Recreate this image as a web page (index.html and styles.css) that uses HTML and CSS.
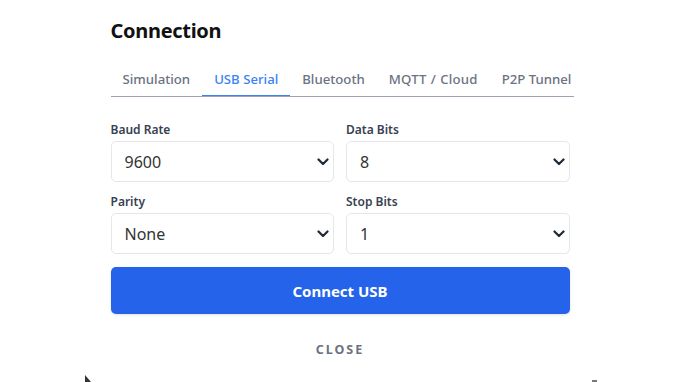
FILE: index.html
```html
<!DOCTYPE html>
<html lang="en">
<head>
<meta charset="utf-8">
<title>Connection</title>
<link rel="stylesheet" href="styles.css">
</head>
<body>
<div class="dialog">
  <h2 class="title">Connection</h2>
  <div class="tabs">
    <div class="tab">Simulation</div>
    <div class="tab active">USB Serial</div>
    <div class="tab">Bluetooth</div>
    <div class="tab wide">MQTT / Cloud</div>
    <div class="tab">P2P Tunnel</div>
  </div>
  <div class="form">
    <div class="field">
      <div class="label">Baud Rate</div>
      <div class="select"><span>9600</span><svg class="chev" viewBox="0 0 12 8" width="12" height="8"><path d="M1.5 1.5 L6 6 L10.5 1.5" fill="none" stroke="#1f2937" stroke-width="2.2" stroke-linecap="round" stroke-linejoin="round"/></svg></div>
    </div>
    <div class="field">
      <div class="label">Data Bits</div>
      <div class="select"><span>8</span><svg class="chev" viewBox="0 0 12 8" width="12" height="8"><path d="M1.5 1.5 L6 6 L10.5 1.5" fill="none" stroke="#1f2937" stroke-width="2.2" stroke-linecap="round" stroke-linejoin="round"/></svg></div>
    </div>
    <div class="field">
      <div class="label">Parity</div>
      <div class="select"><span>None</span><svg class="chev" viewBox="0 0 12 8" width="12" height="8"><path d="M1.5 1.5 L6 6 L10.5 1.5" fill="none" stroke="#1f2937" stroke-width="2.2" stroke-linecap="round" stroke-linejoin="round"/></svg></div>
    </div>
    <div class="field">
      <div class="label">Stop Bits</div>
      <div class="select"><span>1</span><svg class="chev" viewBox="0 0 12 8" width="12" height="8"><path d="M1.5 1.5 L6 6 L10.5 1.5" fill="none" stroke="#1f2937" stroke-width="2.2" stroke-linecap="round" stroke-linejoin="round"/></svg></div>
    </div>
  </div>
  <button class="connect">Connect USB</button>
  <div class="close">CLOSE</div>
</div>
<div class="corner corner-left"></div>
<div class="corner corner-right"></div>
</body>
</html>
```
FILE: styles.css
```css
* { box-sizing: border-box; }
html, body { margin: 0; padding: 0; background: #ffffff; }
body {
  font-family: "Noto Sans", "Open Sans", sans-serif;
  width: 680px;
  height: 382px;
  overflow: hidden;
  position: relative;
}
.dialog {
  width: 459px;
  margin: 0 auto;
  padding-top: 17px;
}
.title {
  margin: 0;
  font-size: 20px;
  line-height: 28px;
  font-weight: 700;
  letter-spacing: -0.3px;
  color: #111111;
}
.tabs {
  margin-top: 15px;
  width: 463px;
  display: flex;
  overflow: hidden;
  border-bottom: 1px solid #9ca3af;
  white-space: nowrap;
}
.tab {
  flex: none;
  padding: 9px 12px 6px;
  font-size: 13.2px;
  line-height: 20px;
  font-weight: 500;
  color: #6b7280;
  border-bottom: 2px solid transparent;
  margin-bottom: -1px;
}
.tab.wide { word-spacing: 0.5px; letter-spacing: 0.2px; }
.tab.active {
  color: #3b82f6;
  border-bottom-color: #3b82f6;
}
.form {
  margin-top: 25px;
  display: grid;
  grid-template-columns: 1fr 1fr;
  column-gap: 12px;
  row-gap: 12px;
}
.label {
  font-size: 12px;
  line-height: 16px;
  font-weight: 600;
  color: #374151;
  margin-bottom: 3px;
}
.select {
  height: 41px;
  border: 1px solid #e5e7eb;
  border-radius: 5px;
  display: flex;
  align-items: center;
  justify-content: space-between;
  padding: 0 4px 0 13px;
  font-size: 16px;
  color: #333333;
}
.chev { display: block; }
.connect {
  display: block;
  width: 100%;
  margin-top: 13px;
  height: 47px;
  border: none;
  border-radius: 5px;
  background: #2563eb;
  color: #ffffff;
  font-family: "Noto Sans", "Open Sans", sans-serif;
  font-size: 15px;
  font-weight: 700;
  box-shadow: 0 1px 3px rgba(0,0,0,0.12);
}
.close {
  margin-top: 28px;
  text-align: center;
  font-size: 12.5px;
  line-height: 16px;
  font-weight: 700;
  letter-spacing: 2px;
  color: #6b7280;
}
.corner {
  position: absolute;
  background: #333;
}
.corner-left {
  left: 85px;
  top: 375px;
  width: 6px;
  height: 7px;
  clip-path: polygon(0 0, 100% 100%, 0 100%);
}
.corner-right {
  left: 592px;
  top: 380px;
  width: 5px;
  height: 2px;
  background: #777;
}
```
